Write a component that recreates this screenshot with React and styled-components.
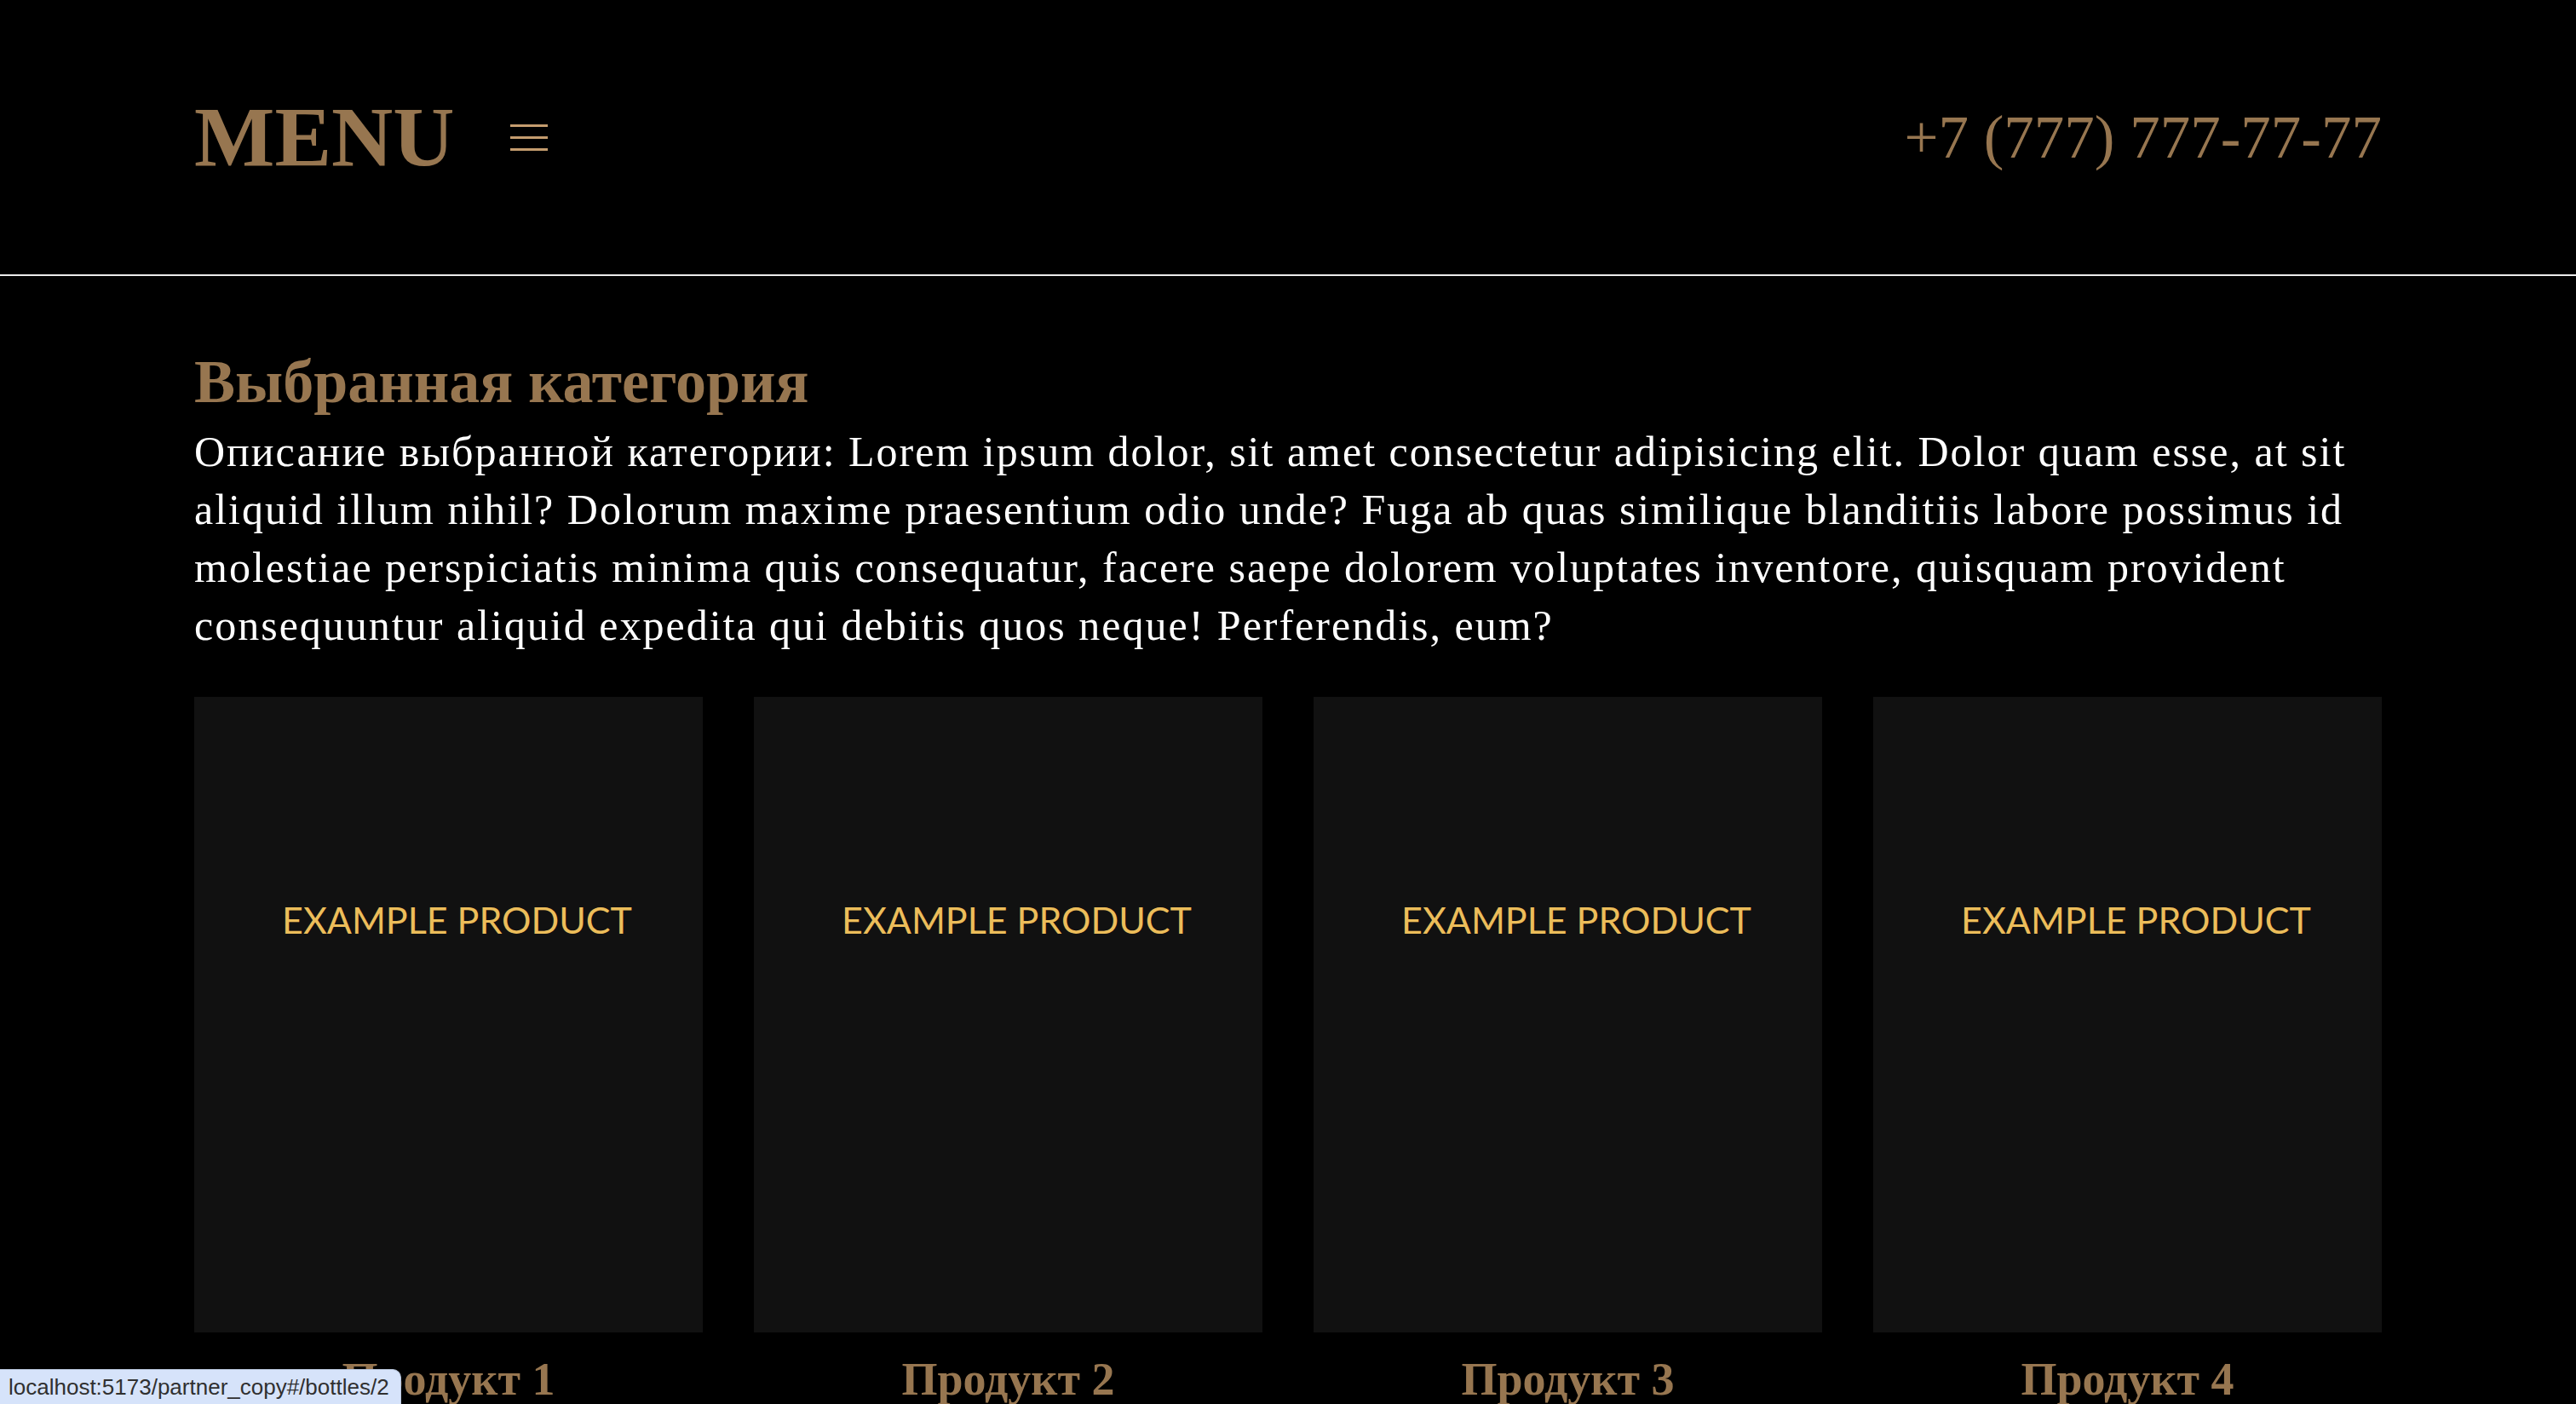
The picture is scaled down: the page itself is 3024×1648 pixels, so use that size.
import React from "react";
import styled, { createGlobalStyle } from "styled-components";

const GlobalStyle = createGlobalStyle`
  body {
    margin: 0;
    background: #000;
    font-family: "Liberation Serif", "Times New Roman", serif;
  }
`;

const products = ["Продукт 1", "Продукт 2", "Продукт 3", "Продукт 4"];

const App = () => {
  return (
    <>
      <GlobalStyle />
      <Page>
        <Header>
          <Brand>
            <Logo>MENU</Logo>
            <Burger aria-label="menu">
              <span />
              <span />
              <span />
            </Burger>
          </Brand>
          <Phone>+7 (777) 777-77-77</Phone>
        </Header>

        <Main>
          <Title>Выбранная категория</Title>
          <Description>
            Описание выбранной категории: Lorem ipsum dolor, sit amet
            consectetur adipisicing elit. Dolor quam esse, at sit aliquid illum
            nihil? Dolorum maxime praesentium odio unde? Fuga ab quas similique
            blanditiis labore possimus id molestiae perspiciatis minima quis
            consequatur, facere saepe dolorem voluptates inventore, quisquam
            provident consequuntur aliquid expedita qui debitis quos neque!
            Perferendis, eum?
          </Description>

          <Grid>
            {products.map((name) => (
              <Product key={name}>
                <Card>
                  <CardLabel>EXAMPLE PRODUCT</CardLabel>
                </Card>
                <ProductName>{name}</ProductName>
              </Product>
            ))}
          </Grid>
        </Main>
      </Page>
      <StatusBubble>localhost:5173/partner_copy#/bottles/2</StatusBubble>
    </>
  );
};

const Page = styled.div`
  min-height: 100vh;
  background: #000;
`;

const Header = styled.header`
  display: flex;
  align-items: center;
  justify-content: space-between;
  height: 324px;
  padding: 0 228px;
  border-bottom: 2px solid #ececec;
  box-sizing: border-box;
`;

const Brand = styled.div`
  display: flex;
  align-items: center;
  gap: 65px;
`;

const Logo = styled.h1`
  margin: 0;
  font-size: 100px;
  line-height: 1;
  font-weight: 700;
  color: #977650;
`;

const Burger = styled.button`
  display: flex;
  flex-direction: column;
  gap: 11px;
  width: 44px;
  padding: 0;
  border: none;
  background: none;
  cursor: pointer;

  > span {
    display: block;
    height: 3px;
    background: #c49c6e;
  }
`;

const Phone = styled.a`
  font-size: 71px;
  line-height: 1;
  color: #977650;
  text-decoration: none;
`;

const Main = styled.main`
  padding: 88px 228px 0;
`;

const Title = styled.h2`
  margin: 0;
  font-size: 72px;
  line-height: 1;
  font-weight: 700;
  color: #977650;
`;

const Description = styled.p`
  margin: 12px 0 0;
  font-size: 50px;
  line-height: 68px;
  letter-spacing: 2px;
  color: #fff;
`;

const Grid = styled.div`
  display: grid;
  grid-template-columns: repeat(4, 1fr);
  gap: 60px;
  margin-top: 50px;
`;

const Product = styled.div`
  display: flex;
  flex-direction: column;
  align-items: center;
`;

const Card = styled.div`
  width: 100%;
  aspect-ratio: 4 / 5;
  background: #111111;
  display: flex;
  justify-content: center;
  padding: 236px 0 0 20px;
  box-sizing: border-box;
`;

const CardLabel = styled.span`
  font-family: Lato, "Open Sans", sans-serif;
  font-weight: 400;
  font-size: 43px;
  line-height: 1.2;
  height: fit-content;
  color: #ecbd5a;
`;

const ProductName = styled.h3`
  margin: 28px 0 0;
  font-size: 54px;
  line-height: 1;
  font-weight: 700;
  color: #977650;
`;

const StatusBubble = styled.div`
  position: fixed;
  left: 0;
  bottom: 0;
  width: 471px;
  height: 41px;
  padding: 0 10px;
  box-sizing: border-box;
  display: flex;
  align-items: center;
  background: #d6e3fa;
  border: 1px solid #b9c6dc;
  border-left: none;
  border-bottom: none;
  border-top-right-radius: 10px;
  font-family: "Liberation Sans", Arial, sans-serif;
  font-size: 26px;
  color: #303030;
`;

export default App;
